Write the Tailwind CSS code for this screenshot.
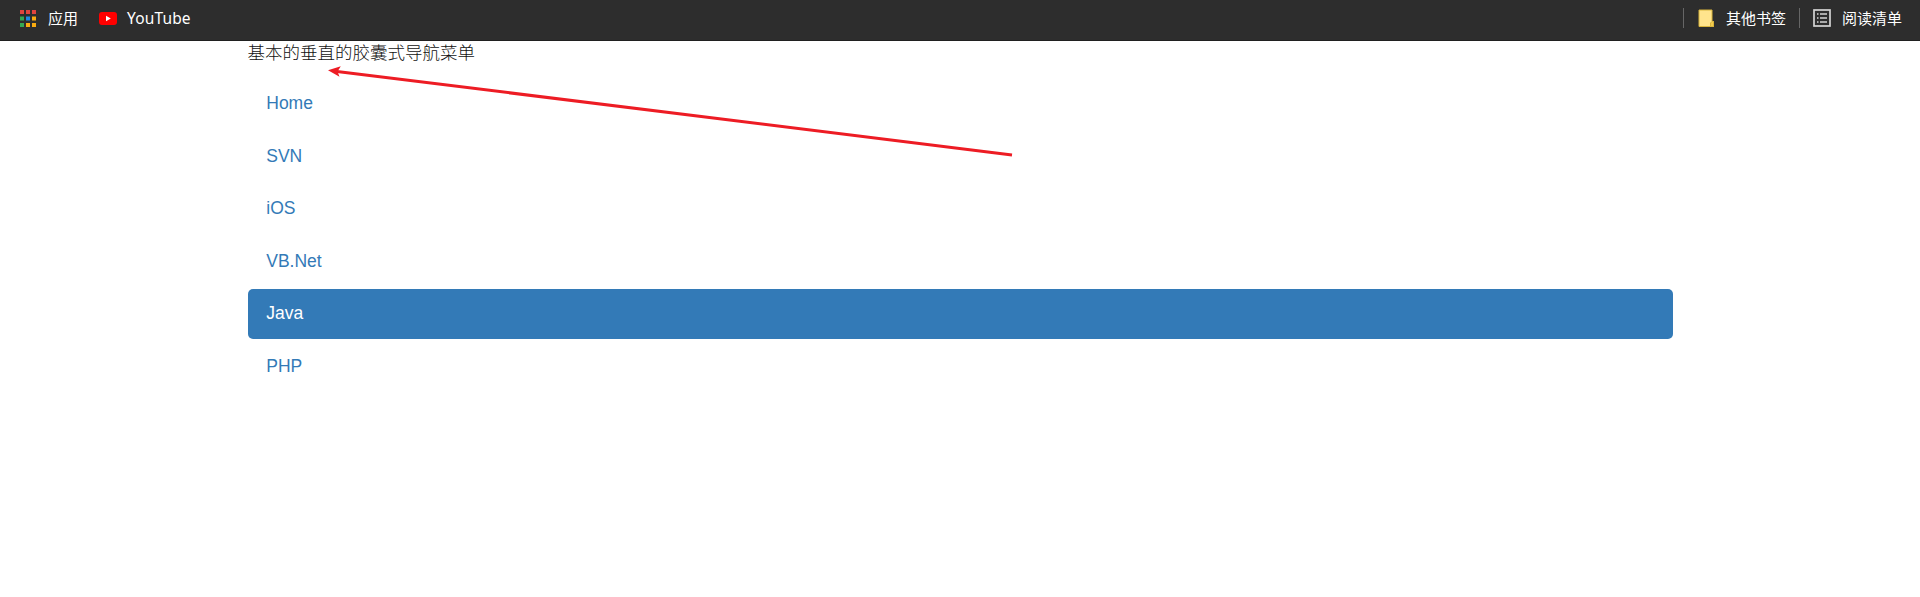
<!DOCTYPE html>
<html lang="zh-CN">
<head>
<meta charset="utf-8">
<title>导航菜单</title>
<script src="https://cdn.jsdelivr.net/npm/@tailwindcss/browser@4"></script>
</head>
<body class="relative h-[597px] overflow-hidden bg-white font-['Liberation_Sans','Noto_Sans_CJK_SC',sans-serif] text-[17.5px] leading-[25px] text-[#333]">
<header class="flex h-[41px] items-center justify-between border-b border-[#202020] bg-[#2d2d2d] pr-[17px] pb-[4px] pl-5 font-['Noto_Sans','Noto_Sans_CJK_SC',sans-serif] text-[15px] leading-5 text-white">
  <div class="flex items-center">
    <svg class="mr-[12px] h-[17px] w-4" viewBox="0 0 16 17">
      <path fill="#e0443e" d="M0 0h4v4H0zM6 0h4v4H6zM12 0h4v4h-4z"/>
      <path fill="#34a853" d="M0 6.500h4v4H0zM0 13h4v4H0z"/>
      <path fill="#1e88e5" d="M6 6.500h4v4H6z"/>
      <path fill="#f9ab10" d="M12 6.500h4v4h-4zM6 13h4v4H6zM12 13h4v4h-4z"/>
    </svg>
    <span class="mr-[21px]">应用</span>
    <svg class="mr-[10px] h-[13px] w-[18px]" viewBox="0 0 18 13"><rect width="18" height="13" rx="3" fill="#f00"/><path fill="#fff" d="M7 3.700v5.600l4.800-2.800z"/></svg>
    <span class="text-[15.5px] tracking-[0.15px]">YouTube</span>
  </div>
  <div class="flex items-center">
    <i class="mr-[14px] h-5 w-px bg-[#666]"></i>
    <svg class="mr-[12px] h-[19px] w-4" viewBox="0 0 16 19"><path fill="#ffe48d" stroke="#d9b53c" d="M1 1h13v11.500h1.500v5H1z"/><path fill="#f3cb4d" stroke="#d9b53c" d="M12.500 17.500v-3.500l1.500-1.500h1.500v5z"/></svg>
    <span class="mr-[13px]">其他书签</span>
    <i class="mr-[13px] h-5 w-px bg-[#666]"></i>
    <svg class="mr-[11px] h-[18px] w-[18px]" viewBox="0 0 18 18"><rect x="1" y="1" width="16" height="16" fill="none" stroke="#d4d4d4" stroke-width="1.700"/><path fill="#d4d4d4" d="M4 4.300h1.500v1.400H4zM7 4.300h7v1.400H7zM4 8.300h1.500v1.400H4zM7 8.300h7v1.400H7zM4 12.300h1.500v1.400H4zM7 12.300h7v1.400H7z"/></svg>
    <span class="mr-px">阅读清单</span>
  </div>
</header>
<main class="mx-auto w-[1425px]">
  <p class="mb-[13px] font-light text-[#111]">基本的垂直的胶囊式导航菜单</p>
  <nav class="flex flex-col gap-[2.5px] text-[#337ab7]">
    <a class="rounded-[5px] px-[18.75px] pt-[12px] pb-[13px]">Home</a>
    <a class="rounded-[5px] px-[18.75px] pt-[12px] pb-[13px]">SVN</a>
    <a class="rounded-[5px] px-[18.75px] pt-[12px] pb-[13px]">iOS</a>
    <a class="rounded-[5px] px-[18.75px] pt-[12px] pb-[13px]">VB.Net</a>
    <a class="rounded-[5px] bg-[#337ab7] px-[18.75px] pt-[12px] pb-[13px] text-white">Java</a>
    <a class="rounded-[5px] px-[18.75px] pt-[12px] pb-[13px]">PHP</a>
  </nav>
</main>
<svg class="absolute top-[60px] left-[320px] h-[100px] w-[700px]" viewBox="320 60 700 100">
  <path d="M335 71.200L1012 155" stroke="#ed1c24" stroke-width="3" fill="none"/>
  <path d="M328 70.300L340.800 66.200L337.500 71.500L339.500 76.700z" fill="#ed1c24"/>
</svg>
</body>
</html>
